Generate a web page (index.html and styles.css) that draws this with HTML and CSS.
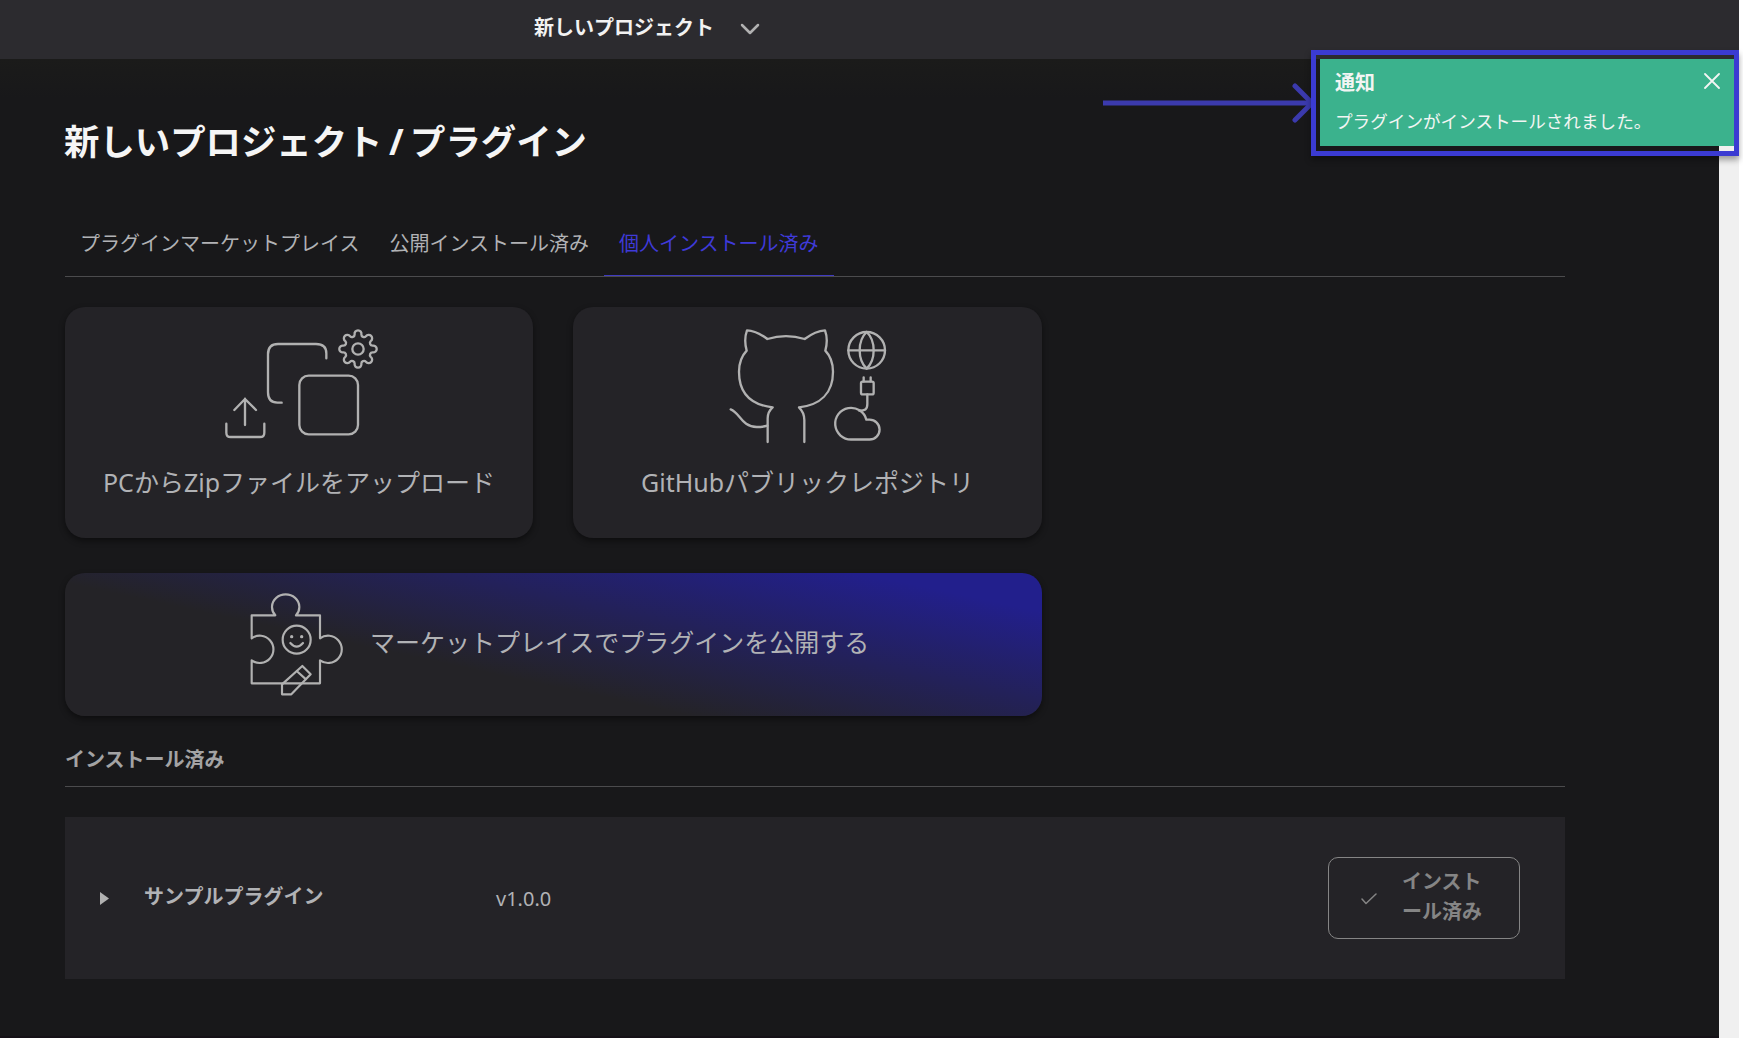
FILE: index.html
```html
<!DOCTYPE html>
<html lang="ja">
<head>
<meta charset="utf-8">
<title>新しいプロジェクト / プラグイン</title>
<link rel="stylesheet" href="styles.css">
</head>
<body>
<div class="app">
  <header class="topbar">
    <span class="project-name">新しいプロジェクト</span>
    <svg class="chevron" viewBox="0 0 20 12"><path d="M2 2l8 8 8-8"/></svg>
  </header>
  <div class="viewport">
    <main class="page">
      <h1 class="page-title">新しいプロジェクト / プラグイン</h1>
      <nav class="tabs">
        <a class="tab">プラグインマーケットプレイス</a>
        <a class="tab">公開インストール済み</a>
        <a class="tab tab-active">個人インストール済み</a>
      </nav>
      <section class="cards">
        <div class="card">
          <svg class="card-icon card-icon-zip" viewBox="0 0 600 450">
            <path d="M245 278H232Q204 278 204 247V133Q204 102 234 102H348Q379 102 379 130V145"/>
            <rect x="298" y="197" width="176" height="176" rx="28"/>
            <path d="M79 341V368Q79 381 92 381H180Q193 381 193 368V341M135 345V266M103 300L135 267L168 300"/>
            <g transform="translate(474 117)">
              <circle r="17"/>
              <path d="M43.8-10.1A10.3 10.3 0 1 1 43.8 10.1A8 8 0 0 0 38.2 23.8A10.3 10.3 0 1 1 23.8 38.2A8 8 0 0 0 10.1 43.8A10.3 10.3 0 1 1-10.1 43.8A8 8 0 0 0-23.8 38.2A10.3 10.3 0 1 1-38.2 23.8A8 8 0 0 0-43.8 10.1A10.3 10.3 0 1 1-43.8-10.1A8 8 0 0 0-38.2-23.8A10.3 10.3 0 1 1-23.8-38.2A8 8 0 0 0-10.1-43.8A10.3 10.3 0 1 1 10.1-43.8A8 8 0 0 0 23.8-38.2A10.3 10.3 0 1 1 38.2-23.8A8 8 0 0 0 43.8-10.1Z"/>
            </g>
          </svg>
          <span class="card-label">PCからZipファイルをアップロード</span>
        </div>
        <div class="card">
          <svg class="card-icon card-icon-github" viewBox="0 0 600 450">
            <path d="M173 396V325Q173 305 188 292C120 284 87 250 87 185C87 158 95 138 110 122C104 100 104 80 111 61C132 62 152 72 172 87Q228 70 284 87C304 72 324 62 345 61C352 80 352 100 346 122C361 138 369 158 369 185C369 250 330 285 267 292Q283 308 283 330V396"/>
            <path d="M62 298C90 308 95 351 140 351Q160 351 172 347"/>
            <circle cx="470" cy="121" r="55"/>
            <path d="M415 121H525M470 66C442 92 442 150 470 176C498 150 498 92 470 66"/>
            <path d="M461 202V214M482 202V214M472 253V282C472 299 464 302 448 302"/>
            <rect x="453" y="215" width="38" height="38" rx="5"/>
            <path d="M424 388.500A47.500 47.500 0 1 1 469 329H479A29.700 29.700 0 0 1 479 388.500Z"/>
          </svg>
          <span class="card-label">GitHubパブリックレポジトリ</span>
        </div>
        <div class="card banner">
          <svg class="banner-icon" viewBox="0 0 390 405">
            <path d="M65 121H136A41 38 0 1 1 198 121H270V190A41 41 0 1 1 270 256V325H65V256A41 41 0 1 0 65 190Z"/>
            <circle cx="200" cy="194" r="42"/>
            <circle class="eye" cx="185" cy="185" r="5"/>
            <circle class="eye" cx="215" cy="185" r="5"/>
            <path d="M181 204Q200 226 219 204"/>
            <path d="M156 358V328L217 273L242 298L184 358ZM200 288L228 313"/>
          </svg>
          <span class="card-label">マーケットプレイスでプラグインを公開する</span>
        </div>
      </section>
      <h2 class="section-title">インストール済み</h2>
      <section class="plugin">
        <svg class="caret" viewBox="0 0 9 13"><path d="M0 0L9 6.500L0 13Z"/></svg>
        <span class="plugin-name">サンプルプラグイン</span>
        <span class="plugin-version">v1.0.0</span>
        <button class="installed">
          <svg class="check" viewBox="0 0 16 12"><path d="M1 6l4 4.500L15 1"/></svg>
          <span class="installed-label">インスト<br>ール済み</span>
        </button>
      </section>
    </main>
    <div class="scrollbar"></div>
  </div>
</div>
<svg class="arrow" viewBox="0 0 212 40"><path d="M0 20H206"/><path class="arrow-head" d="M192 3L209 20L192 37"/></svg>
<aside class="highlight">
  <div class="toast">
    <div class="toast-head">
      <strong class="toast-title">通知</strong>
      <svg class="close" viewBox="0 0 16 16"><path d="M1 1l14 14M15 1L1 15"/></svg>
    </div>
    <p class="toast-text">プラグインがインストールされました。</p>
  </div>
</aside>
</body>
</html>
```
FILE: styles.css
```css
* { box-sizing: border-box; }

body {
  margin: 0;
  background: #fff;
  color: #b1b2b5;
  font-family: "Noto Sans", "Noto Sans CJK JP", sans-serif;
  font-size: 20px;
  line-height: 30px;
  overflow: hidden;
}

svg { flex: none; fill: none; stroke: #b1b1b1; stroke-linecap: round; stroke-linejoin: round; }

.app { width: 1739px; height: 1038px; display: flex; flex-direction: column; }

.topbar {
  flex: none;
  height: 59px;
  padding: 0 0 4px 534px;
  display: flex;
  align-items: center;
  gap: 26px;
  background: #2c2b2f;
}
.project-name { color: #f2f2f2; font-weight: 700; }
.chevron { width: 20px; height: 12px; margin-top: 2px; stroke-width: 2.5; }

.viewport { flex: 1; display: flex; }
.page {
  flex: 1;
  padding: 57px 154px 0 65px;
  background: linear-gradient(#1b1b1a, #18181a 40px);
  border-bottom: 2px solid #151117;
}
.scrollbar { width: 20px; background: #f0f0f0; }

.page-title {
  margin: 0 0 0 -1px;
  color: #f5f5f5;
  font-size: 35.4px;
  font-weight: 700;
  line-height: 50px;
  word-spacing: -2.8px;
}

.tabs { display: flex; height: 62px; margin-top: 49px; border-bottom: 1px solid #4b4b4d; }
.tab { padding: 14px 15px 0; border-bottom: 1px solid transparent; white-space: nowrap; }
.tab-active { color: #3f3ad8; border-bottom-color: #3f3ac0; }

.cards {
  display: grid;
  grid-template-columns: 468px 469px;
  grid-template-rows: 231px 143px;
  gap: 35px 40px;
  margin-top: 30px;
}
.card {
  display: flex;
  flex-direction: column;
  align-items: center;
  padding-top: 3px;
  border-radius: 20px;
  background: #242327;
  box-shadow: 0 3px 6px rgba(0, 0, 0, .45);
  font-size: 25px;
  white-space: nowrap;
}
.card-icon { width: 200px; height: 150px; margin-bottom: 7px; stroke-width: 7; }
.card-icon-zip { margin-left: 1px; }
.card-icon-github { margin-left: 4px; }

.banner {
  grid-column: span 2;
  flex-direction: row;
  align-items: flex-start;
  padding: 2px 0 0 165px;
  background: linear-gradient(12deg, #242327 38%, #221f8c 89%);
}
.banner-icon { width: 130px; height: 135px; stroke-width: 6.5; }
.eye { fill: #b1b1b1; stroke: none; }
.banner .card-label { margin: 52px 0 0 10px; }

.section-title {
  margin: 29px 0 30px;
  padding-bottom: 11px;
  border-bottom: 1px solid #4b4b4d;
  color: #a3a3a4;
  font-size: 20px;
  line-height: 30px;
}

.plugin {
  display: flex;
  align-items: center;
  height: 162px;
  padding: 0 45px 0 35px;
  background: #242327;
}
.caret { width: 9px; height: 13px; fill: #b1b1b1; stroke: none; }
.plugin-name { width: 352px; margin: -2px 0 0 35px; font-weight: 700; }
.plugin-version { flex: 1; margin-top: 2px; }
.installed {
  display: flex;
  align-items: center;
  width: 192px;
  height: 82px;
  padding: 0 0 0 32px;
  border: 1px solid #858585;
  border-radius: 10px;
  background: none;
  color: #858585;
  font: inherit;
  font-weight: 700;
  text-align: left;
}
.check { width: 16px; height: 12px; margin: 2px 25px 0 0; stroke: #858585; stroke-width: 1.5; }
.installed-label { margin-top: -2px; white-space: nowrap; }

.arrow { position: absolute; left: 1103px; top: 83px; width: 212px; height: 40px; stroke: #3b3aad; stroke-width: 5; stroke-linecap: butt; }
.arrow-head { stroke-linecap: round; }

.highlight {
  position: absolute;
  left: 1311px;
  top: 50px;
  width: 428px;
  height: 106px;
  padding: 4px 0 0 4px;
  border: 5px solid #3b3bd2;
  box-shadow: 0 4px 6px rgba(0, 0, 0, .35);
}
.toast { height: 87px; padding: 9px 14px 0 15px; background: #3bb28d; color: #f2f5f3; }
.toast-head { display: flex; justify-content: space-between; align-items: center; }
.close { width: 16px; height: 16px; margin-bottom: 4px; stroke: #f2f5f3; stroke-width: 1.8; }
.toast-text { margin: 8px 0 0; font-size: 17.6px; }
```
